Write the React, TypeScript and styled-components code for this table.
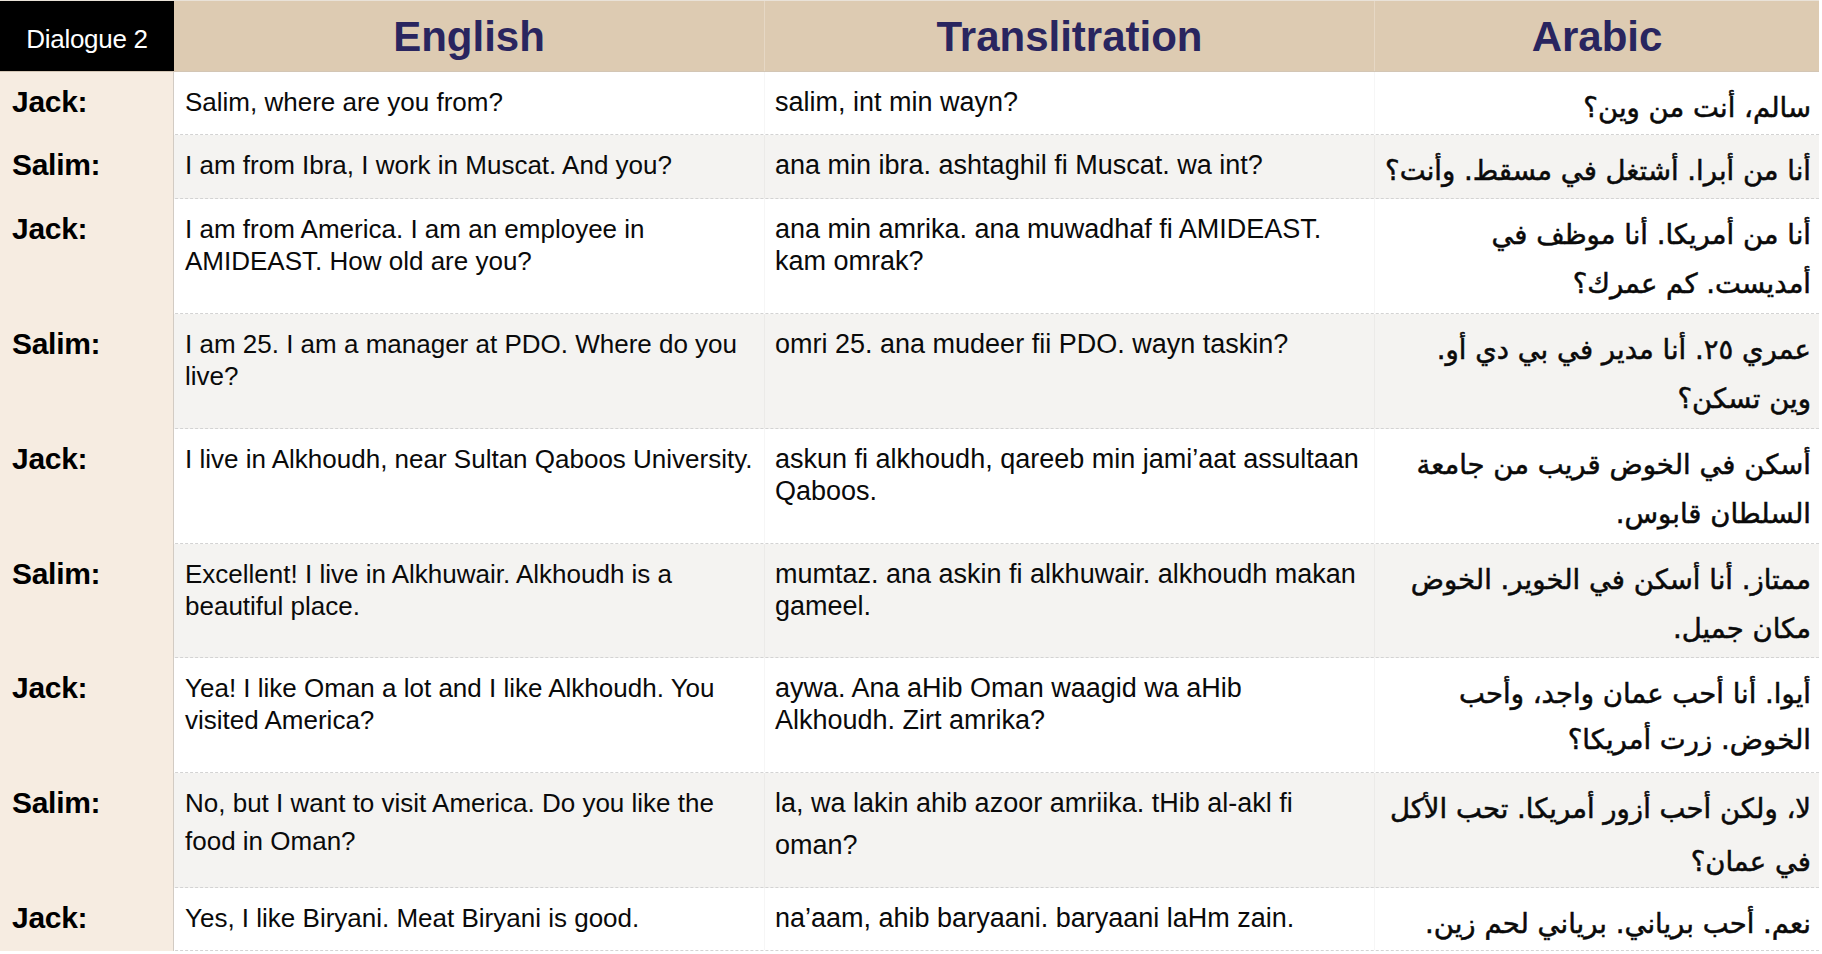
import React from "react";
import styled, { createGlobalStyle } from "styled-components";

const GlobalStyle = createGlobalStyle`
  html, body { margin: 0; padding: 0; background: #ffffff; }
  body { font-family: "Liberation Sans", Arial, sans-serif; color: #000; }
`;

const COLS = "174px 591px 610px 444px";

const Table = styled.div`
  width: 1819px;
  display: flex;
  flex-direction: column;
`;

const HeaderRow = styled.div`
  display: grid;
  grid-template-columns: ${COLS};
  height: 72px;
  background: #ddcbb2;
  border-top: 1px solid #e9e2d8;
  box-sizing: border-box;
  border-bottom: 1px solid #d3c6b5;
`;

const DialogueCell = styled.div`
  background: #000;
  color: #fff;
  font-size: 26px;
  display: flex;
  align-items: center;
  justify-content: center;
  padding-top: 7px;
  letter-spacing: -0.3px;
`;

const HeadCell = styled.div<{ $last?: boolean }>`
  display: flex;
  align-items: center;
  justify-content: center;
  padding-top: 2px;
  font-size: 42px;
  font-weight: 700;
  color: #29255f;
  border-right: ${(p) => (p.$last ? "none" : "1px solid #e6d8c5")};
`;

const Row = styled.div<{ $h: number; $alt: boolean }>`
  display: grid;
  grid-template-columns: ${COLS};
  height: ${(p) => p.$h}px;
  box-sizing: border-box;
  background: ${(p) => (p.$alt ? "#f4f3f1" : "#ffffff")};
  border-bottom: 1px dashed #d3d3d3;
`;

const NameCell = styled.div`
  background: #f6ece1;
  border-right: 1.5px solid #d2cbc3;
  font-size: 30px;
  font-weight: 700;
  line-height: 34px;
  padding: 13px 0 0 12px;
  margin-bottom: -1px;
  letter-spacing: -0.3px;
`;

const TextCell = styled.div<{ $lh: number; $size: number; $sep?: boolean }>`
  font-size: ${(p) => p.$size}px;
  line-height: ${(p) => p.$lh}px;
  padding: ${(p) => 30 - p.$lh / 2}px 0 0 ${(p) => (p.$size > 26.5 ? 10 : 11)}px;
  border-right: ${(p) => (p.$sep ? "1px solid rgba(0,0,0,0.035)" : "none")};
  color: #0a0a0a;
`;

const ArabicCell = styled.div<{ $lh: number }>`
  font-family: "DejaVu Sans", "Noto Sans", sans-serif;
  font-size: 27.5px;
  line-height: ${(p) => p.$lh}px;
  padding: ${(p) => 35 - p.$lh / 2}px 8px 0 0;
  text-align: right;
  color: #0a0a0a;
  -webkit-text-stroke: 0.5px #0a0a0a;
`;

const Line = styled.div`
  white-space: nowrap;
`;

const ArLine = styled.div`
  white-space: nowrap;
  direction: rtl;
`;

type Entry = {
  name: string;
  en: string[];
  tr: string[];
  ar: string[];
  h: number;
  enLh?: number;
  trLh?: number;
  arLh?: number;
};

const rows: Entry[] = [
  {
    name: "Jack:",
    en: ["Salim, where are you from?"],
    tr: ["salim, int min wayn?"],
    ar: ["سالم، أنت من وين؟"],
    h: 63,
  },
  {
    name: "Salim:",
    en: ["I am from Ibra, I work in Muscat. And you?"],
    tr: ["ana min ibra. ashtaghil fi Muscat. wa int?"],
    ar: ["أنا من أبرا. أشتغل في مسقط. وأنت؟"],
    h: 64,
  },
  {
    name: "Jack:",
    en: ["I am from America. I am an employee in", "AMIDEAST. How old are you?"],
    tr: ["ana min amrika. ana muwadhaf fi AMIDEAST.", "kam omrak?"],
    ar: ["أنا من أمريكا. أنا موظف في", "أمديست. كم عمرك؟"],
    h: 115,
  },
  {
    name: "Salim:",
    en: ["I am 25. I am a manager at PDO. Where do you", "live?"],
    tr: ["omri 25. ana mudeer fii PDO. wayn taskin?"],
    ar: ["عمري ٢٥. أنا مدير في بي دي أو.", "وين تسكن؟"],
    h: 115,
  },
  {
    name: "Jack:",
    en: ["I live in Alkhoudh, near Sultan Qaboos University."],
    tr: ["askun fi alkhoudh, qareeb min jami’aat assultaan", "Qaboos."],
    ar: ["أسكن في الخوض قريب من جامعة", "السلطان قابوس."],
    h: 115,
  },
  {
    name: "Salim:",
    en: ["Excellent! I live in Alkhuwair. Alkhoudh is a", "beautiful place."],
    tr: ["mumtaz. ana askin fi alkhuwair. alkhoudh makan", "gameel."],
    ar: ["ممتاز. أنا أسكن في الخوير. الخوض", "مكان جميل."],
    h: 114,
  },
  {
    name: "Jack:",
    en: ["Yea! I like Oman a lot and I like Alkhoudh. You", "visited America?"],
    tr: ["aywa. Ana aHib Oman waagid wa aHib", "Alkhoudh. Zirt amrika?"],
    ar: ["أيوا. أنا أحب عمان واجد، وأحب", "الخوض. زرت أمريكا؟"],
    h: 115,
    arLh: 46,
  },
  {
    name: "Salim:",
    en: ["No, but I want to visit America. Do you like the", "food in Oman?"],
    tr: ["la, wa lakin ahib azoor amriika. tHib al-akl fi", "oman?"],
    ar: ["لا، ولكن أحب أزور أمريكا. تحب الأكل", "في عمان؟"],
    h: 115,
    enLh: 38,
    trLh: 42,
    arLh: 53,
  },
  {
    name: "Jack:",
    en: ["Yes, I like Biryani. Meat Biryani is good."],
    tr: ["na’aam, ahib baryaani. baryaani laHm zain."],
    ar: ["نعم. أحب برياني. برياني لحم زين."],
    h: 63,
  },
];

export default function App() {
  return (
    <>
      <GlobalStyle />
      <Table>
        <HeaderRow>
          <DialogueCell>Dialogue 2</DialogueCell>
          <HeadCell>English</HeadCell>
          <HeadCell>Translitration</HeadCell>
          <HeadCell $last>Arabic</HeadCell>
        </HeaderRow>
        {rows.map((r, i) => (
          <Row key={i} $h={r.h} $alt={i % 2 === 1}>
            <NameCell>{r.name}</NameCell>
            <TextCell $lh={r.enLh ?? 32} $size={26} $sep>
              {r.en.map((l, j) => (
                <Line key={j}>{l}</Line>
              ))}
            </TextCell>
            <TextCell $lh={r.trLh ?? 32} $size={27} $sep>
              {r.tr.map((l, j) => (
                <Line key={j}>{l}</Line>
              ))}
            </TextCell>
            <ArabicCell $lh={r.arLh ?? 49}>
              {r.ar.map((l, j) => (
                <ArLine key={j}>{l}</ArLine>
              ))}
            </ArabicCell>
          </Row>
        ))}
      </Table>
    </>
  );
}
